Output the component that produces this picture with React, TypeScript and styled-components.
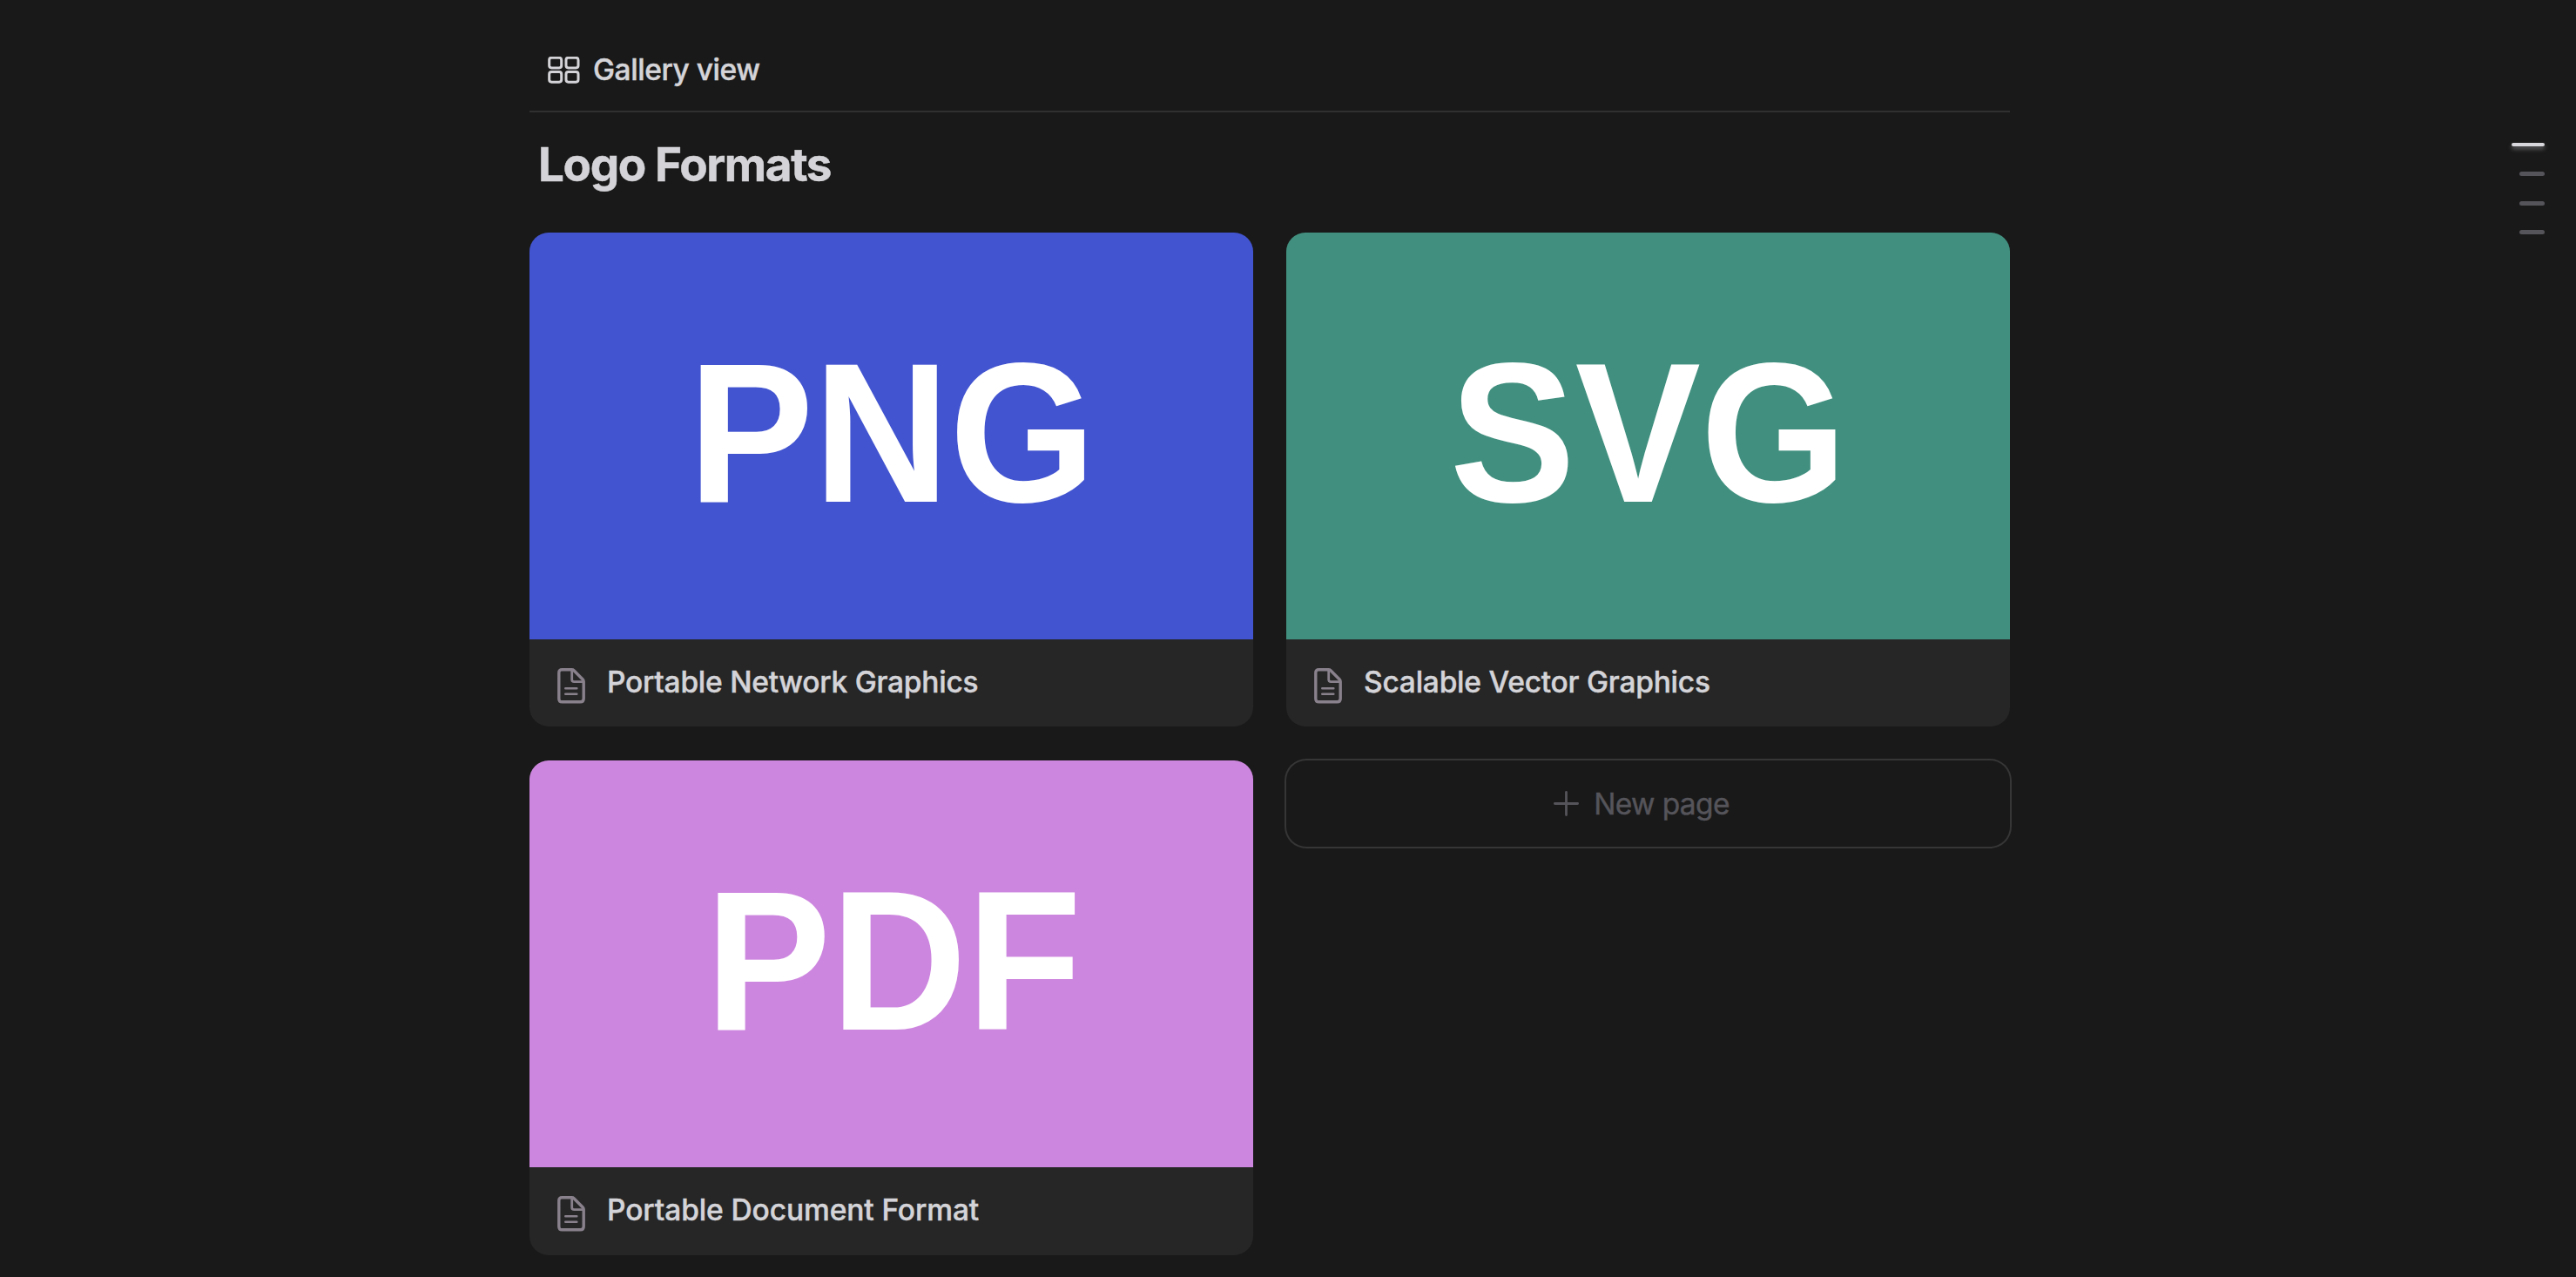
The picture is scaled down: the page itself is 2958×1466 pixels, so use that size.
import React from "react";
import styled, { createGlobalStyle } from "styled-components";

const GlobalStyle = createGlobalStyle`
  *, *::before, *::after { box-sizing: border-box; }
  html, body { margin: 0; background: #191919; }
  body { font-family: Inter, "Liberation Sans", sans-serif; color: #d4d4d8; overflow: hidden; }
`;

const Page = styled.div`
  height: 1466px;
  display: grid;
  grid-template-columns: 608px 1700px 1fr;
  overflow: hidden;
  background: #191919;
`;

const Main = styled.main`
  grid-column: 2;
  display: flex;
  flex-direction: column;
`;

const TabBar = styled.nav`
  height: 129px;
  flex: none;
  padding: 60px 0 0 21px;
  border-bottom: 2px solid #303030;
`;

const Tab = styled.div`
  display: flex;
  align-items: center;
  height: 40px;
  gap: 14px;
  svg { display: block; flex: none; }
`;

const Label = styled.span<{ $weight?: number; $spacing?: number; $color?: string }>`
  font-size: 33.5px;
  font-weight: ${(p) => p.$weight ?? 500};
  letter-spacing: ${(p) => p.$spacing ?? 0}px;
  color: ${(p) => p.$color ?? "#d4d4d8"};
  -webkit-text-stroke: 0.45px currentColor;
  line-height: 40px;
  white-space: nowrap;
`;

const Heading = styled.h1`
  margin: 0;
  padding: 30px 0 0 10px;
  height: 138px;
  font-size: 53px;
  line-height: 60px;
  font-weight: 700;
  letter-spacing: -1.4px;
  -webkit-text-stroke: 0.5px currentColor;
  white-space: nowrap;
`;

const Gallery = styled.div`
  display: grid;
  grid-template-columns: 831px 831px;
  grid-template-rows: 567px 568px;
  column-gap: 38px;
  row-gap: 39px;
`;

const Card = styled.article`
  border-radius: 22px;
  overflow: hidden;
  background: #262626;
`;

const Cover = styled.div<{ $color: string; $nudge?: number }>`
  height: 467px;
  padding: 0 0 8px ${(p) => 1 + (p.$nudge ?? 0)}px;
  background: ${(p) => p.$color};
  display: flex;
  align-items: center;
  justify-content: center;
`;

const CoverText = styled.span`
  font-family: "Liberation Sans", Arial, sans-serif;
  font-weight: 700;
  font-size: 229px;
  line-height: 260px;
  color: #fff;
  transform: scaleX(0.943);
`;

const Caption = styled.div`
  display: flex;
  padding: 29px 0 0 32px;
  gap: 25px;
  svg { display: block; flex: none; margin-top: 4px; }
`;

const NewPage = styled.div`
  height: 99px;
  padding-right: 15px;
  border-radius: 23px;
  box-shadow: 0 0 0 2px #363636;
  display: flex;
  align-items: center;
  justify-content: center;
  gap: 17px;
`;

const Outline = styled.aside`
  display: flex;
  flex-direction: column;
  align-items: flex-end;
  padding: 164px 36px 0 0;
  gap: 29px;
`;

const Mark = styled.div<{ $active?: boolean }>`
  width: ${(p) => (p.$active ? 38 : 29)}px;
  height: ${(p) => (p.$active ? 4 : 5)}px;
  border-radius: 3px;
  background: ${(p) => (p.$active ? "#d8d7dc" : "#55545a")};
  box-shadow: ${(p) => (p.$active ? "0 3px 5px #66666a" : "none")};
  &:last-child { margin-top: -1px; }
`;

const GalleryIcon = () => (
  <svg width="38" height="31" viewBox="0 0 38 31" fill="none" stroke="#d4d4d8" strokeWidth="3">
    <rect x="1.7" y="1.3" width="14" height="11.6" rx="2.6" />
    <rect x="21" y="1.3" width="14" height="11.6" rx="2.6" />
    <rect x="1.7" y="17.6" width="14" height="11.6" rx="2.6" />
    <rect x="21" y="17.6" width="14" height="11.6" rx="2.6" />
  </svg>
);

const DocIcon = () => (
  <svg width="32" height="41" viewBox="0 0 32 41" fill="none" stroke="#89818c" strokeWidth="3.4" strokeLinecap="round" strokeLinejoin="round">
    <path d="M5.5 1.7H16.5Q18 1.7 19 2.7L29.2 13Q30.2 14 30.2 15.5V35Q30.2 38.8 26.5 38.8H5.5Q1.8 38.8 1.8 35V5.5Q1.8 1.7 5.5 1.7Z" />
    <path d="M16.7 2.5V13.2Q16.7 15.6 19.2 15.6H29.5" strokeWidth="2.8" />
    <path d="M9.3 23.3H22.3M9.3 29.8H22.3" strokeWidth="2.6" />
  </svg>
);

const PlusIcon = () => (
  <svg width="29" height="29" viewBox="0 0 29 29" stroke="#55545a" strokeWidth="2.8" strokeLinecap="round">
    <path d="M14.5 1.4V27.6M1.4 14.5H27.6" />
  </svg>
);

const pages = [
  { cover: "PNG", color: "#4254d0", title: "Portable Network Graphics", spacing: -0.25, nudge: 0 },
  { cover: "SVG", color: "#41907f", title: "Scalable Vector Graphics", spacing: -0.23, nudge: 0 },
  { cover: "PDF", color: "#cd86df", title: "Portable Document Format", spacing: -0.1, nudge: 3 },
];

export default function App() {
  return (
    <>
      <GlobalStyle />
      <Page>
        <Main>
          <TabBar>
            <Tab>
              <GalleryIcon />
              <Label $spacing={-0.45}>Gallery view</Label>
            </Tab>
          </TabBar>
          <Heading>Logo Formats</Heading>
          <Gallery>
            {pages.map((p) => (
              <Card key={p.cover}>
                <Cover $color={p.color} $nudge={p.nudge}>
                  <CoverText>{p.cover}</CoverText>
                </Cover>
                <Caption>
                  <DocIcon />
                  <Label $spacing={p.spacing}>{p.title}</Label>
                </Caption>
              </Card>
            ))}
            <NewPage>
              <PlusIcon />
              <Label $weight={400} $spacing={-0.65} $color="#55545a">New page</Label>
            </NewPage>
          </Gallery>
        </Main>
        <Outline>
          <Mark $active />
          <Mark />
          <Mark />
          <Mark />
        </Outline>
      </Page>
    </>
  );
}
